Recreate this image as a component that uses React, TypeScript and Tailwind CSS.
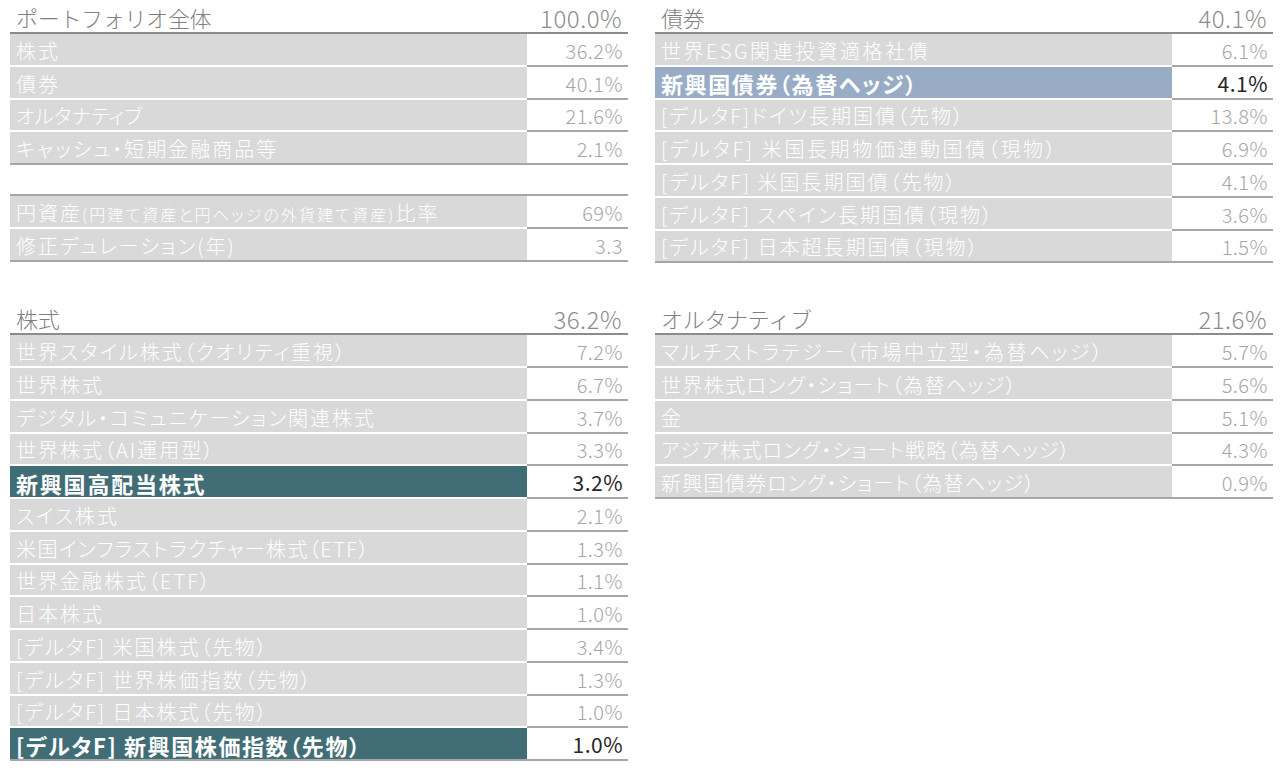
import React from "react";

type Row = { label: React.ReactNode; value: string; hl?: "blue" | "teal"; t?: string };

const FONT = "[font-family:'Noto_Sans_CJK_JP','Noto_Sans',sans-serif] [font-feature-settings:'palt']";

function Header({ title, value }: { title: string; value: string }) {
  return (
    <div className="flex h-[34px] items-center justify-between border-b-2 border-[#8c8c8c] pt-[3px]">
      <span className="pl-[6px] text-[22px] font-light tracking-[-0.3px] text-[#7f7f7f] [font-feature-settings:normal]">
        {title}
      </span>
      <span className="pr-[6px] text-[24px] font-light tracking-[0.5px] text-[#8c8c8c]">{value}</span>
    </div>
  );
}

function TableRow({ row, last }: { row: Row; last: boolean }) {
  const labelBg =
    row.hl === "blue" ? "bg-[#98adc5]" : row.hl === "teal" ? "bg-[#416e76]" : "bg-[#d9d9d9]";
  const labelBorder = last ? "border-[#a6a6a6]" : "border-white";
  const track = row.t ?? (row.hl ? "tracking-[1.6px]" : "tracking-[2px]");
  return (
    <div className="flex h-[32.75px]">
      <div
        className={`flex flex-1 items-center whitespace-pre border-b-2 pl-[6px] pt-[3px] ${labelBg} ${labelBorder} ${track} ${
          row.hl ? "text-[22px] font-bold text-white" : "text-[20px] font-light text-white"
        }`}
      >
        {row.label}
      </div>
      <div
        className={`flex w-[101px] items-center justify-end border-b-2 border-[#a6a6a6] pr-[5px] pt-[3px] ${
          row.hl ? "text-[21px] font-normal text-[#262626]" : "text-[20px] font-light text-[#a6a6a6]"
        } tracking-[0.5px]`}
      >
        {row.value}
      </div>
    </div>
  );
}

function Rows({ rows }: { rows: Row[] }) {
  return (
    <div className="flex flex-col">
      {rows.map((r, i) => (
        <TableRow key={i} row={r} last={i === rows.length - 1} />
      ))}
    </div>
  );
}

const portfolio: Row[] = [
  { label: "株式", value: "36.2%" },
  { label: "債券", value: "40.1%" },
  { label: "オルタナティブ", value: "21.6%", t: "tracking-[0.4px]" },
  { label: "キャッシュ・短期金融商品等", value: "2.1%" },
];

const extra: Row[] = [
  {
    label: (
      <span>
        円資産<span className="text-[16px] tracking-[2.1px]">(円建て資産と円ヘッジの外貨建て資産)</span>比率
      </span>
    ),
    value: "69%",
  },
  { label: "修正デュレーション(年)", value: "3.3" },
];

const bonds: Row[] = [
  { label: "世界ESG関連投資適格社債", value: "6.1%", t: "tracking-[2.5px]" },
  { label: "新興国債券（為替ヘッジ）", value: "4.1%", hl: "blue" },
  { label: "[デルタF]ドイツ長期国債（先物）", value: "13.8%" },
  { label: "[デルタF] 米国長期物価連動国債（現物）", value: "6.9%", t: "tracking-[2.6px]" },
  { label: "[デルタF] 米国長期国債（先物）", value: "4.1%" },
  { label: "[デルタF] スペイン長期国債（現物）", value: "3.6%" },
  { label: "[デルタF] 日本超長期国債（現物）", value: "1.5%" },
];

const equities: Row[] = [
  { label: "世界スタイル株式（クオリティ重視）", value: "7.2%" },
  { label: "世界株式", value: "6.7%" },
  { label: "デジタル・コミュニケーション関連株式", value: "3.7%" },
  { label: "世界株式（AI運用型）", value: "3.3%" },
  { label: "新興国高配当株式", value: "3.2%", hl: "teal", t: "tracking-[1.8px]" },
  { label: "スイス株式", value: "2.1%" },
  { label: "米国インフラストラクチャー株式（ETF）", value: "1.3%", t: "tracking-[1.45px]" },
  { label: "世界金融株式（ETF）", value: "1.1%" },
  { label: "日本株式", value: "1.0%" },
  { label: "[デルタF] 米国株式（先物）", value: "3.4%" },
  { label: "[デルタF] 世界株価指数（先物）", value: "1.3%" },
  { label: "[デルタF] 日本株式（先物）", value: "1.0%" },
  { label: "[デルタF] 新興国株価指数（先物）", value: "1.0%", hl: "teal" },
];

const alts: Row[] = [
  { label: "マルチストラテジー（市場中立型・為替ヘッジ）", value: "5.7%", t: "tracking-[2.5px]" },
  { label: "世界株式ロング・ショート（為替ヘッジ）", value: "5.6%", t: "tracking-[1.4px]" },
  { label: "金", value: "5.1%" },
  { label: "アジア株式ロング・ショート戦略（為替ヘッジ）", value: "4.3%", t: "tracking-[1.1px]" },
  { label: "新興国債券ロング・ショート（為替ヘッジ）", value: "0.9%", t: "tracking-[1.25px]" },
];

export default function App() {
  return (
    <div className={`h-[770px] w-[1280px] overflow-hidden bg-white pl-[10px] ${FONT}`}>
      <div className="grid grid-cols-[618px_618px] gap-x-[27px] gap-y-[38px]">
        <div className="flex flex-col">
          <Header title="ポートフォリオ全体" value="100.0%" />
          <Rows rows={portfolio} />
          <div className="h-[31px] border-b-2 border-[#a6a6a6]" />
          <Rows rows={extra} />
        </div>
        <div className="flex flex-col">
          <Header title="債券" value="40.1%" />
          <Rows rows={bonds} />
        </div>
        <div className="flex flex-col">
          <Header title="株式" value="36.2%" />
          <Rows rows={equities} />
        </div>
        <div className="flex flex-col">
          <Header title="オルタナティブ" value="21.6%" />
          <Rows rows={alts} />
        </div>
      </div>
    </div>
  );
}
